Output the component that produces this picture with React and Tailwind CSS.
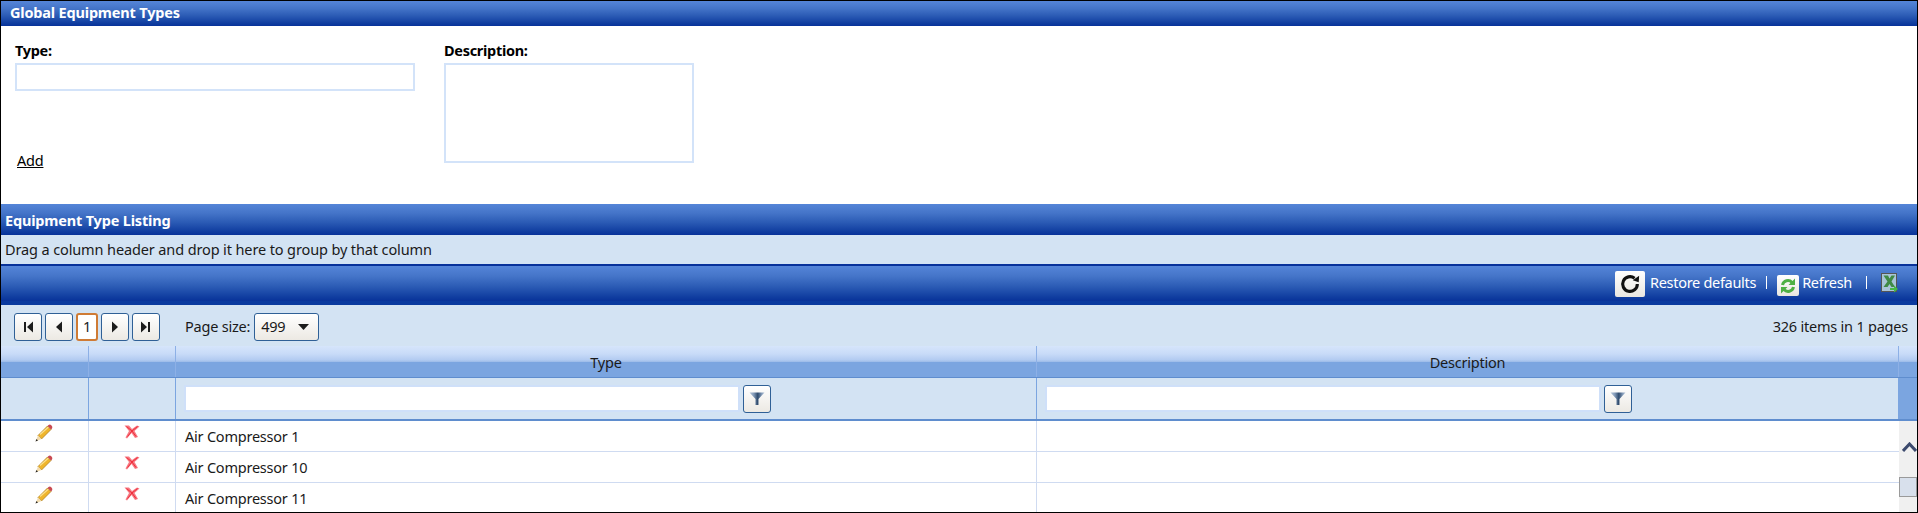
import React from "react";

const F = { fontFamily: '"Noto Sans", "Open Sans", sans-serif' };
const bar = "bg-[linear-gradient(to_bottom,#5585d8_0%,#4474c8_30%,#2a5ab4_60%,#0f3c9f_90%,#08329a_100%)]";
const face = "rounded-[3px] border border-[#2f6096] bg-[linear-gradient(to_bottom,#ffffff,#ece9e3)]";
const txt = "text-[14.5px] tracking-[-0.22px]";
const head = "text-[14.5px] font-bold tracking-[-0.18px] text-white";

function Pencil() {
  return (
    <svg width="18" height="18" viewBox="0 0 18 18">
      <path d="M3 11.5 L12.5 2 L16 5.5 L6.5 15 Z" fill="#efb52c" stroke="#a67718" strokeWidth="0.7" />
      <path d="M5 10.5 L13.5 3" stroke="#fbe08e" strokeWidth="1.2" />
      <path d="M12.5 2 L13.5 1 Q15 0 16.5 1.5 Q18 3 17 4.5 L16 5.5 Z" fill="#c94a52" />
      <path d="M3 11.5 L6.5 15 L0.5 17.5 Z" fill="#f3dcae" />
      <path d="M0.5 17.5 L1.5 15 L3 16.5 Z" fill="#222" />
    </svg>
  );
}

function Cross() {
  return (
    <svg width="16" height="14" viewBox="0 0 16 14">
      <path d="M0.5 0.5 L5 0.5 L8 4 L13 0.5 L15.5 1.5 L10.5 6 L14 12 L11 13 L7.5 8 L3 13.5 L1.5 12.5 L5 6 Z" fill="#f6626c" opacity="0.85" />
      <path d="M2.5 1.5 L8 6 L13.5 1.5 M8 6 L12 11.5 M8 6 L3.5 11.5" stroke="#ee2a38" strokeWidth="1" fill="none" />
    </svg>
  );
}

function Funnel() {
  return (
    <svg width="16" height="15" viewBox="0 0 16 15">
      <defs>
        <linearGradient id="fn" x1="0" y1="0" x2="1" y2="0">
          <stop offset="0" stopColor="#b9c9dd" />
          <stop offset="0.3" stopColor="#7f97b5" />
          <stop offset="0.55" stopColor="#2e4a6c" />
          <stop offset="0.8" stopColor="#7f97b5" />
          <stop offset="1" stopColor="#b3c4da" />
        </linearGradient>
      </defs>
      <path d="M0.5 1.5 H15.5 L9.5 8 V14 H6.5 V8 Z" fill="url(#fn)" />
    </svg>
  );
}

function Pager({ d }) {
  return (
    <div className={`${face} flex items-center justify-center h-[28px] w-[28px]`}>
      <svg width="10" height="12" viewBox="0 0 10 12">
        <path d={d} fill="#1c1c1c" />
      </svg>
    </div>
  );
}

function FilterCell() {
  return (
    <div className="flex items-center h-full pl-[8px] gap-[3px]">
      <div className="w-[556px] h-[27px] bg-white border-2 border-[#cfe0f9]" />
      <div className={`${face} flex items-center justify-center w-[28px] h-[28px]`}>
        <Funnel />
      </div>
    </div>
  );
}

const cols = "grid grid-cols-[88px_87px_861px_862px_1fr]";

function Row({ name, last }) {
  const b = last ? "" : "border-b border-[#cfdbf1]";
  return (
    <div className={`${cols} ${last ? "h-[30px]" : "h-[31px]"}`}>
      <div className={`flex justify-center pt-[3px] pr-[1px] border-r border-[#cfdbf1] ${b}`}>
        <Pencil />
      </div>
      <div className={`flex justify-center pt-[4px] pr-[1px] border-r border-[#cfdbf1] ${b}`}>
        <Cross />
      </div>
      <div className={`flex items-center pl-[9px] pt-[2px] text-[#1a1a1a] border-r border-[#cfdbf1] ${txt} ${b}`}>
        {name}
      </div>
      <div className={b} />
      <div />
    </div>
  );
}

export default function App() {
  return (
    <div style={F} className="w-[1918px] h-[513px] overflow-hidden bg-white border border-black flex flex-col text-black">
      <div className={`${bar} ${head} h-[25px] shrink-0 flex items-center pl-[9px] pb-[2px]`}>
        Global Equipment Types
      </div>

      <div className="h-[178px] shrink-0 flex pl-[14px] pt-[15px] gap-[29px]">
        <div className="w-[400px] flex flex-col">
          <div className="h-[22px] font-bold text-[14.5px] leading-[18px] tracking-[-0.3px]">Type:</div>
          <div className="h-[28px] border-2 border-[#d3e3f9]" />
          <a className={`mt-[59px] ml-[2px] underline leading-[20px] w-fit ${txt}`}>Add</a>
        </div>
        <div className="flex flex-col">
          <div className="h-[22px] font-bold text-[14.5px] leading-[18px] tracking-[-0.3px]">Description:</div>
          <div className="w-[250px] h-[100px] border-2 border-[#d3e3f9]" />
        </div>
      </div>

      <div className={`${bar} ${head} h-[31px] shrink-0 flex items-center pl-[4px] pt-[2px]`}>
        Equipment Type Listing
      </div>

      <div className="h-[29px] shrink-0 bg-[#d3e3f3] flex items-center pl-[4px] text-[#1a1a1a] text-[14.5px] tracking-[-0.12px]">
        Drag a column header and drop it here to group by that column
      </div>

      <div className={`${bar} h-[41px] shrink-0 border-t-2 border-b-4 border-t-[#08329a] border-b-[#0a3a9f] flex items-center justify-end text-white text-[14.5px] tracking-[-0.3px]`}>
        <div className="w-[30px] h-[26px] bg-[linear-gradient(to_bottom,#ffffff,#e9e6e0)] rounded-[2px] flex items-center justify-center">
          <svg width="22" height="22" viewBox="0 0 24 24" fill="none" stroke="#111" strokeWidth="3.4">
            <path d="M20 12a8 8 0 1 1-3-6.2" />
            <path d="M22 3 L21.5 10 L15 8 Z" fill="#111" stroke="none" />
          </svg>
        </div>
        <span className="ml-[5px] pb-[1px]">Restore defaults</span>
        <span className="ml-[10px] w-[1px] h-[13px] bg-white mb-[3px]" />
        <div className="ml-[10px] mt-[4px] w-[22px] h-[21px] bg-[linear-gradient(to_bottom,#ffffff,#e9e6e0)] rounded-[2px] flex items-center justify-center">
          <svg width="16" height="16" viewBox="0 0 16 16" fill="none" stroke="#4eb044" strokeWidth="3">
            <path d="M2.5 7 A5.5 5.5 0 0 1 12 4.5" />
            <path d="M13.5 9 A5.5 5.5 0 0 1 4 11.5" />
            <path d="M15 0.5 V7 H8.5 Z M1 15.5 V9 H7.5 Z" fill="#4eb044" stroke="none" />
          </svg>
        </div>
        <span className="ml-[3px] pb-[1px]">Refresh</span>
        <span className="ml-[14px] w-[1px] h-[13px] bg-white mb-[3px]" />
        <div className="ml-[14px] mr-[19px] mb-[2px]">
          <svg width="17" height="20" viewBox="0 0 17 20">
            <rect x="0.5" y="0.5" width="15" height="18" fill="#a9c4d8" stroke="#555" />
            <path d="M2.5 2.5 L7 2.5 L8.5 5.5 L10.5 2.5 L14 2.5 L10.5 8.5 L14 14 L10.5 14 L8.5 11 L6.5 14 L2.5 14 L6.5 8.5 Z" fill="#3f8a45" />
            <path d="M9 15 H13 V12.5 L17 16 L13 19.5 V17 H9 Z" fill="#48b848" />
          </svg>
        </div>
      </div>

      <div className="h-[41px] shrink-0 bg-[#d3e3f3] flex items-center pl-[13px] pt-[2px] pr-[9px]">
        <div className="flex gap-[3px]">
          <Pager d="M1 1 H3 V11 H1 Z M10 0.5 V11.5 L4 6 Z" />
          <Pager d="M8 0.5 V11.5 L2 6 Z" />
          <div className={`w-[22px] h-[28px] rounded-[3px] border-2 border-[#cf7b35] bg-white flex items-center justify-center text-[#222] ${txt}`}>1</div>
          <Pager d="M2 0.5 V11.5 L8 6 Z" />
          <Pager d="M0 0.5 V11.5 L6 6 Z M7 1 H9 V11 H7 Z" />
        </div>
        <span className={`ml-[25px] text-[#1a1a1a] ${txt}`}>Page size:</span>
        <div className={`${face} flex items-center justify-between h-[28px] w-[65px] ml-[4px] pl-[6px] pr-[9px]`}>
          <span className={`text-[#1a1a1a] ${txt}`}>499</span>
          <svg width="11" height="6" viewBox="0 0 11 6"><path d="M0 0 H11 L5.5 6 Z" fill="#1c1c1c" /></svg>
        </div>
        <span className={`ml-auto text-[#1a1a1a] ${txt}`}>326 items in 1 pages</span>
      </div>

      <div className={`${cols} h-[31px] shrink-0 bg-[linear-gradient(to_bottom,#d6e5fb_0%,#c8dbf8_25%,#b2cbf1_45%,#9dbce9_51%,#7ba5e0_52%,#7ba5e0_100%)] text-[#1a1a1a] ${txt}`}>
        <div className="border-r border-[#8db0e6]" />
        <div className="border-r border-[#8db0e6]" />
        <div className="flex items-center justify-center border-r border-[#8db0e6] pt-[2px]">Type</div>
        <div className="flex items-center justify-center border-r border-[#8db0e6] pt-[2px]">Description</div>
        <div />
      </div>

      <div className={`${cols} h-[44px] shrink-0 border-t border-b-2 border-[#5f8dce] bg-[#d3e3f3]`}>
        <div className="border-r border-[#7ba5e0]" />
        <div className="border-r border-[#7ba5e0]" />
        <div className="border-r border-[#7ba5e0]"><FilterCell /></div>
        <div className="border-r border-[#7ba5e0]"><FilterCell /></div>
        <div className="bg-[#7ba5e0]" />
      </div>

      <div className="relative flex-1">
        <Row name="Air Compressor 1" />
        <Row name="Air Compressor 10" />
        <Row name="Air Compressor 11" last />
        <div className="absolute top-0 bottom-0 right-0 w-[18px] bg-[#f0f0f0]">
          <svg className="absolute left-[3px] top-[21px]" width="15" height="10" viewBox="0 0 15 10" fill="none" stroke="#3c4a6e" strokeWidth="3">
            <path d="M1 9 L7.5 2 L14 9" />
          </svg>
          <div className="absolute left-0 right-0 top-[56px] h-[20px] bg-[#d8e0ec] border border-[#9a9a9a]" />
        </div>
      </div>
    </div>
  );
}
